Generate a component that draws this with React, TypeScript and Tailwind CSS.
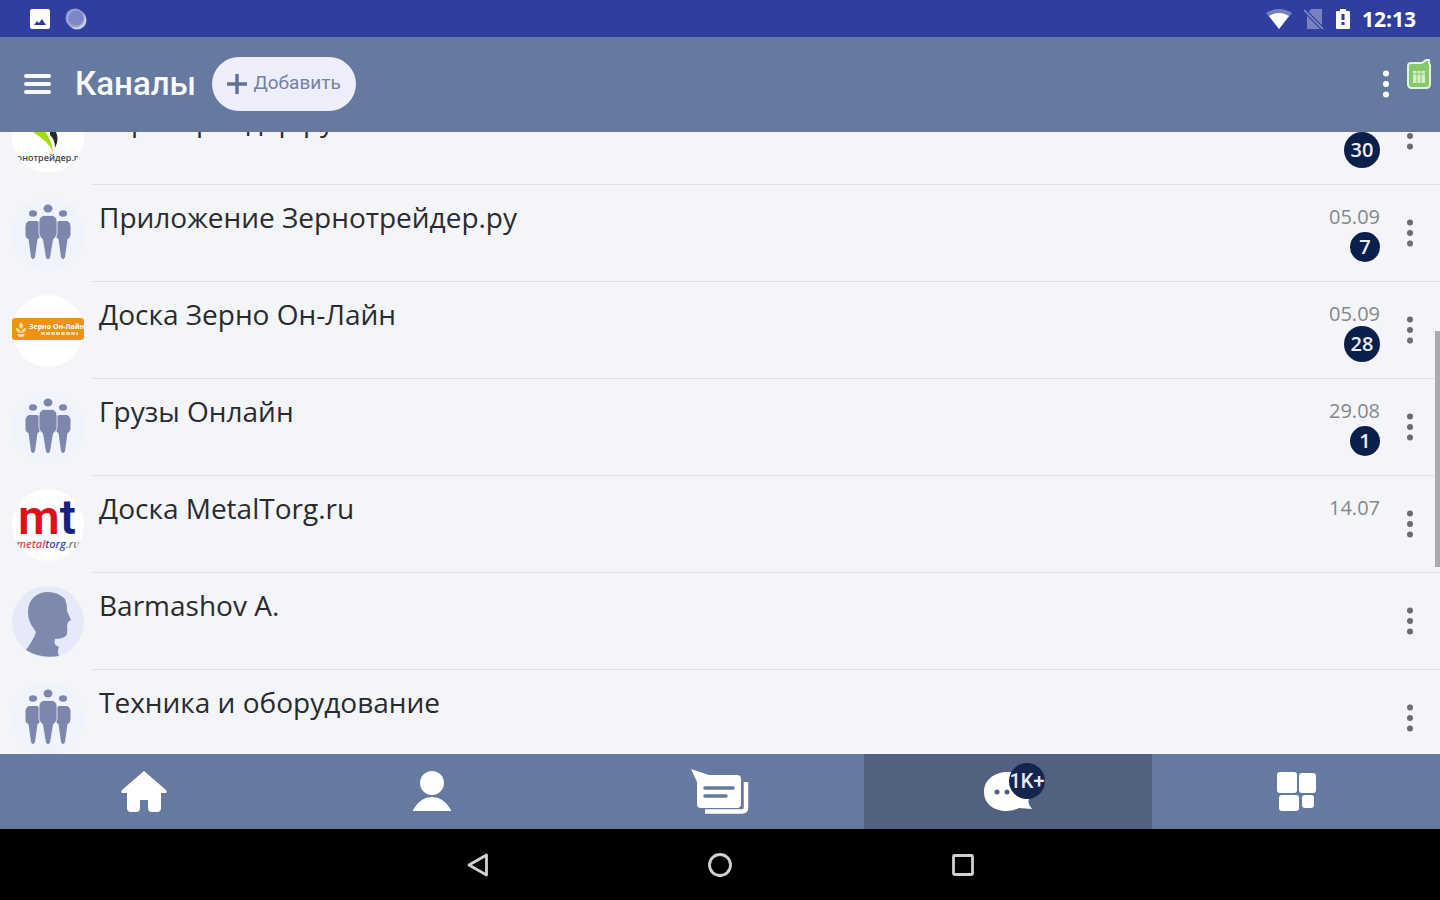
import type { ReactNode } from "react";
import clsx from "clsx";

type AvatarKind = "trader" | "group" | "board" | "metal" | "person";

interface Channel {
  title: string;
  avatar: AvatarKind;
  date?: string;
  unread?: number;
}

const channels: Channel[] = [
  { title: "Зернотрейдер.ру", avatar: "trader", date: "05.09", unread: 30 },
  { title: "Приложение Зернотрейдер.ру", avatar: "group", date: "05.09", unread: 7 },
  { title: "Доска Зерно Он-Лайн", avatar: "board", date: "05.09", unread: 28 },
  { title: "Грузы Онлайн", avatar: "group", date: "29.08", unread: 1 },
  { title: "Доска MetalTorg.ru", avatar: "metal", date: "14.07" },
  { title: "Barmashov A.", avatar: "person" },
  { title: "Техника и оборудование", avatar: "group" },
];

function Dots({ className }: { className?: string }) {
  return (
    <svg width="8" height="28" viewBox="0 0 8 28" fill="currentColor" className={className}>
      <circle cx="4" cy="3.500" r="3" />
      <circle cx="4" cy="14" r="3" />
      <circle cx="4" cy="24.500" r="3" />
    </svg>
  );
}

function Avatar({ kind }: { kind: AvatarKind }) {
  return (
    <div
      className={clsx(
        "size-18 shrink-0 rounded-full",
        kind !== "board" && "overflow-hidden",
        kind === "group" && "bg-[#f0f3fc]",
        kind === "person" && "bg-[#e6eaf8]",
        (kind === "trader" || kind === "board" || kind === "metal") && "bg-white",
      )}
    >
      <svg width="72" height="72" viewBox="0 0 72 72" aria-hidden="true">
        {kind === "trader" && (
          <>
            <path d="M20 22Q38 28 41 51Q36 40 22 32Z" fill="#a3dc10" />
            <path d="M38 24Q50 34 43 47Q43 38 38 34Z" fill="#222c22" />
            <text x="36" y="60" textAnchor="middle" className="text-[9px] font-semibold" fill="#444">
              рнотрейдер.р
            </text>
          </>
        )}
        {kind === "group" && (
          <g fill="#7d86ad">
            <ellipse cx="21" cy="15.500" rx="4" ry="3.300" />
            <path d="M17 23H25Q28 24 28 28V37Q28 40 25.500 41L23 59Q22.500 61 21 61T19 59L16.500 41Q13.500 40 13.500 37V28Q14 24 17 23Z" />
            <ellipse cx="51" cy="15.500" rx="4" ry="3.300" />
            <path d="M47 23H55Q58 24 58.500 28V37Q58 40 55.500 41L53 59Q52.500 61 51 61T49 59L46.500 41Q44 40 44 37V28Q44 24 47 23Z" />
            <ellipse cx="36" cy="10.500" rx="4.500" ry="4" />
            <path
              d="M31 17.500H41Q45 19 45 23V36Q44 40 41.500 41L38.500 59Q38 61.500 36 61.500T33.500 59L30.500 41Q28 40 27 36V23Q27 19 31 17.500Z"
              stroke="#f0f3fc"
              strokeWidth="0.800"
            />
          </g>
        )}
        {kind === "board" && (
          <>
            <rect y="23" width="72" height="22" rx="3" fill="#ee920f" />
            <path
              d="M9 27Q13 31 9 34Q5 31 9 27ZM4 33Q8 33 9 38Q4 38 4 33ZM14 33Q10 33 9 38Q14 38 14 33ZM5 39H13L11 42H7Z"
              fill="#fbd9a8"
            />
            <text x="17" y="34" className="text-[7px] font-bold" fill="#fff">
              Зерно Он-Лайн
            </text>
            <path d="M29 38.500H66" stroke="#fbe3c0" strokeWidth="2.500" strokeDasharray="4 1" />
          </>
        )}
        {kind === "metal" && (
          <>
            <text x="6" y="45" className="font-[Roboto] text-[48px] font-semibold" fill="#dd1218">
              m<tspan fill="#14237f">t</tspan>
            </text>
            <text x="36" y="59" textAnchor="middle" className="text-[11px] font-semibold italic" fill="#d8474e">
              metal<tspan fill="#3c4f9c">torg</tspan><tspan fill="#777">.ru</tspan>
            </text>
          </>
        )}
        {kind === "person" && (
          <path
            d="M36 6C24 6 16 14 16 26C16 35 20 40 24 46Q22 53 14 64Q28 73 47 70Q45 65 47 61Q41 59 43 53Q50 53 54 50Q56 47 55 40L56 36L59 34L55 25V20L53 13Q46 6 36 6Z"
            fill="#7f89ad"
          />
        )}
      </svg>
    </div>
  );
}

function ChannelRow({ channel }: { channel: Channel }) {
  const { title, avatar, date, unread } = channel;
  return (
    <li className="flex h-[97px] gap-2 pl-3">
      <div className="flex items-center">
        <Avatar kind={avatar} />
      </div>
      <div className="flex min-w-0 flex-1 border-b border-[#dfe1e6]">
        <a href="#" className="min-w-0 flex-1 truncate pt-3 pl-[7px] text-[28px] leading-10 text-[#2a2b2e]">
          {title}
        </a>
        <div className="flex flex-col items-end pt-5">
          {date && <time className="text-[20px] leading-6 text-[#85878b]">{date}</time>}
          {unread && (
            <div className="flex h-9 items-center">
              <span
                className={clsx(
                  "flex items-center justify-center rounded-full bg-[#0b1f4b] text-[20px] leading-6 font-semibold text-[#eceef3]",
                  unread > 9 ? "size-9" : "size-[30px]",
                )}
              >
                {unread}
              </span>
            </div>
          )}
        </div>
        <button type="button" aria-label="Меню канала" className="flex w-15 items-center justify-center text-[#6b6c70]">
          <Dots />
        </button>
      </div>
    </li>
  );
}

function StatusBar() {
  return (
    <div className="flex h-[37px] shrink-0 items-center justify-between bg-[#303f9f] pr-6 pl-[30px] text-white">
      <div className="flex items-center gap-[15px]">
        <svg width="20" height="20" viewBox="0 0 20 20">
          <rect width="20" height="20" rx="2" fill="#fff" />
          <path d="M4 16L7 12L9 14L12 10L16 16Z" fill="#303f9f" />
        </svg>
        <svg width="22" height="22" viewBox="0 0 22 22">
          <circle cx="12" cy="12" r="9.500" fill="#c9cdea" />
          <circle cx="10" cy="10" r="9.500" fill="#9aa1d4" />
          <circle cx="11" cy="10" r="7.500" fill="#7d86c8" />
        </svg>
      </div>
      <div className="flex items-center gap-2">
        <svg width="26" height="20" viewBox="0 0 26 20">
          <path d="M0 4Q13-4 26 4L13 20Z" fill="#fff" opacity="0.35" />
          <path d="M3 7Q13 1 23 7L13 20Z" fill="#fff" />
        </svg>
        <svg width="20" height="20" viewBox="0 0 20 20" className="ml-1">
          <path d="M7 0H18V20H3V5Z" fill="#fff" opacity="0.35" />
          <path d="M0 1L19 20" stroke="#303f9f" strokeWidth="4" />
          <path d="M0 1L19 20" stroke="#8b94cb" strokeWidth="1.500" />
        </svg>
        <svg width="22" height="20" viewBox="0 0 22 20">
          <path d="M8 0H14V2H17Q18 2 18 3V19Q18 20 17 20H5Q4 20 4 19V3Q4 2 5 2H8Z" fill="#fff" />
          <path d="M9.500 5H12.500V11H9.500ZM9.500 13H12.500V16H9.500Z" fill="#303f9f" />
        </svg>
        <span className="text-[21px] leading-6 font-bold">12:13</span>
      </div>
    </div>
  );
}

function AppHeader() {
  return (
    <header className="flex h-[95px] shrink-0 items-center bg-[#6679a0] pr-2 pb-0.5 pl-6 font-[Roboto,sans-serif]">
      <button type="button" aria-label="Открыть меню">
        <svg width="27" height="22" viewBox="0 0 27 22" fill="none" stroke="#f6f7fb" strokeWidth="4" strokeLinecap="round">
          <path d="M2 3H25M2 11H25M2 19H25" />
        </svg>
      </button>
      <h1 className="ml-6 text-[33px] leading-10 font-medium text-[#f8f9fc]">Каналы</h1>
      <button
        type="button"
        className="ml-4 flex h-[54px] w-36 items-center justify-center gap-1.5 rounded-full bg-[#eeedfb] text-[19px] text-[#7581a3]"
      >
        <svg width="20" height="20" viewBox="0 0 20 20" stroke="#5f7199" strokeWidth="3.500">
          <path d="M0 10H20M10 0V20" />
        </svg>
        Добавить
      </button>
      <button type="button" aria-label="Ещё" className="ml-auto text-white">
        <Dots />
      </button>
      <svg width="26" height="32" viewBox="0 0 26 32" className="mb-5 ml-4">
        <path d="M5 5H16L20 2H23V5L24 7V26Q24 30 20 30H6Q2 30 2 26V8Q2 5 5 5Z" fill="#85c96b" stroke="#e2f3dc" strokeWidth="2" />
        <rect x="7" y="13" width="12" height="12" fill="#d5efc9" />
        <path d="M11 13V25M15 13V25M7 16H19" stroke="#85c96b" strokeWidth="1" />
      </svg>
    </header>
  );
}

interface Tab {
  label: string;
  icon: ReactNode;
  active?: boolean;
  badge?: string;
}

const tabs: Tab[] = [
  {
    label: "Главная",
    icon: (
      <svg width="46" height="42" viewBox="0 0 46 42" fill="#fff">
        <path d="M23 0L45 19Q47 22 44 22H40V37Q40 41 36 41H31Q27 41 27 37V29H19V37Q19 41 15 41H10Q6 41 6 37V22H2Q-1 22 1 19Z" />
      </svg>
    ),
  },
  {
    label: "Профиль",
    icon: (
      <svg width="38" height="42" viewBox="0 0 38 42" fill="#fff">
        <circle cx="19" cy="12" r="12" />
        <path d="M0 39Q7 26 19 26T38 39V40H0Z" />
      </svg>
    ),
  },
  {
    label: "Объявления",
    icon: (
      <svg width="58" height="46" viewBox="0 0 58 46">
        <path d="M14 42.500H51Q55 42.500 55 38.500V13" fill="none" stroke="#fff" strokeWidth="4.500" />
        <path d="M0 0L18 6H46Q50 6 50 10V35Q50 39 46 39H10Q6 39 6 35V13Z" fill="#fff" />
        <path d="M14 19H42M14 27H35" stroke="#6679a0" strokeWidth="3.500" strokeLinecap="round" />
      </svg>
    ),
  },
  {
    label: "Каналы",
    active: true,
    badge: "1K+",
    icon: (
      <svg width="50" height="42" viewBox="0 0 50 42">
        <path d="M25 1C11 1 1 9 1 21S11 40 24 40Q31 40 36 37L49 38Q44 33 46 28Q49 22 48 18C46 8 36 1 25 1Z" fill="#fff" />
        <g fill="#536180">
          <circle cx="14" cy="21" r="2.500" />
          <circle cx="24" cy="21" r="2.500" />
          <circle cx="34" cy="21" r="2.500" />
        </g>
      </svg>
    ),
  },
  {
    label: "Разделы",
    icon: (
      <svg width="40" height="40" viewBox="0 0 40 40" fill="#fff">
        <rect x="1" width="20" height="21" rx="3" />
        <rect x="23" y="1" width="17" height="20" rx="3" />
        <rect x="3" y="23" width="20" height="16" rx="3" />
        <rect x="26" y="23" width="12" height="13" rx="3" />
      </svg>
    ),
  },
];

function TabBar() {
  return (
    <nav className="grid h-[75px] shrink-0 grid-cols-5 bg-[#6679a0]">
      {tabs.map((tab) => (
        <a
          key={tab.label}
          href="#"
          aria-label={tab.label}
          className={clsx("flex items-center justify-center", tab.active && "bg-[#536180]")}
        >
          <span className="relative">
            {tab.icon}
            {tab.badge && (
              <span className="absolute -top-2 -right-3 flex size-9 items-center justify-center rounded-full bg-[#14264f] font-[Roboto,sans-serif] text-[20px] leading-6 font-medium text-[#e6e9f1]">
                {tab.badge}
              </span>
            )}
          </span>
        </a>
      ))}
    </nav>
  );
}

function SystemNav() {
  return (
    <div className="flex h-[71px] shrink-0 items-center justify-center gap-[217px] bg-black text-[#d0d0d0]">
      <button type="button" aria-label="Назад">
        <svg width="26" height="26" viewBox="0 0 26 26" fill="none" stroke="currentColor" strokeWidth="2.800" strokeLinejoin="round">
          <path d="M22.500 3V23L5 13Z" />
        </svg>
      </button>
      <button type="button" aria-label="Домой">
        <svg width="26" height="26" viewBox="0 0 26 26" fill="none" stroke="currentColor" strokeWidth="2.800">
          <circle cx="13" cy="13" r="10.500" />
        </svg>
      </button>
      <button type="button" aria-label="Недавние">
        <svg width="26" height="26" viewBox="0 0 26 26" fill="none" stroke="currentColor" strokeWidth="2.800">
          <rect x="3.500" y="3.500" width="19" height="19" rx="1" />
        </svg>
      </button>
    </div>
  );
}

export default function App() {
  return (
    <div className="flex h-screen flex-col overflow-hidden bg-[#f4f5f9] font-['Open_Sans',sans-serif]">
      <StatusBar />
      <AppHeader />
      <main className="relative min-h-0 flex-1 overflow-hidden">
        <ul className="-mt-11">
          {channels.map((channel) => (
            <ChannelRow key={channel.title} channel={channel} />
          ))}
        </ul>
        <div className="absolute top-[32%] right-0 h-[38%] w-[5px] bg-[#a9abae]" />
      </main>
      <TabBar />
      <SystemNav />
    </div>
  );
}
